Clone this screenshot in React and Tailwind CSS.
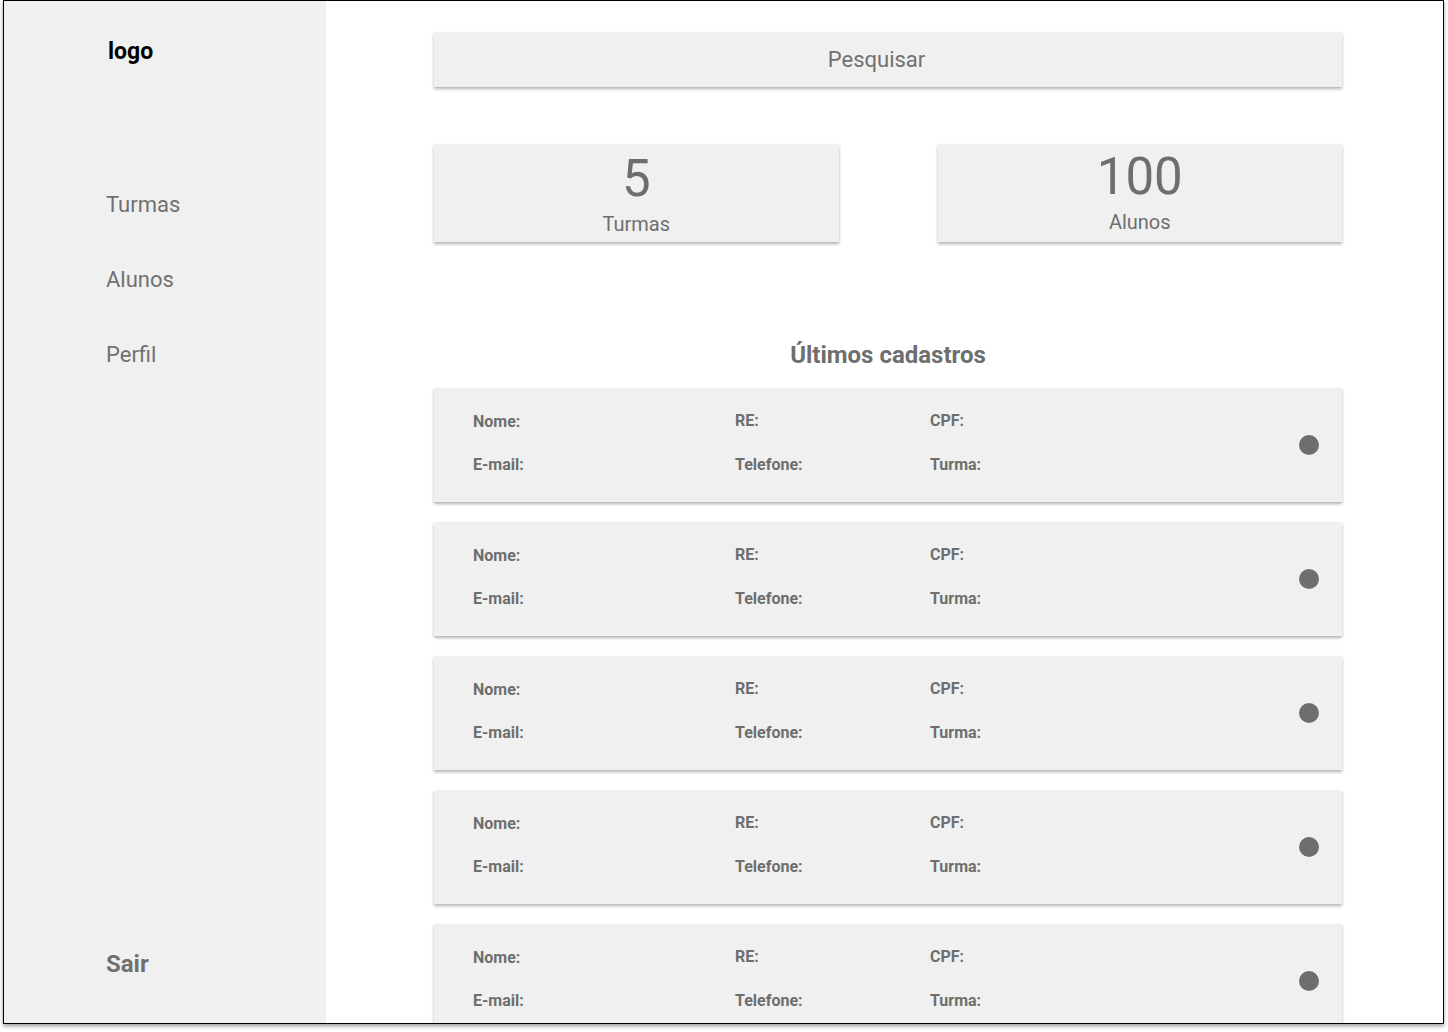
const stats = [
    { value: '5', label: 'Turmas', pad: 'pt-[9px]' },
    { value: '100', label: 'Alunos', pad: 'pt-[7px]' },
];

const menu = ['Turmas', 'Alunos', 'Perfil'];

const rows = [1, 2, 3, 4, 5];

function RecordCard() {
    return (
        <div className="h-[114px] shrink-0 bg-[#f0f0f0] shadow-[0_2px_3px_rgba(0,0,0,0.3)] flex items-center pl-[39px] pr-[23px]">
            <div className="self-start pt-[23px] flex-1 grid grid-cols-[262px_195px_1fr] gap-y-[23px] text-[16px] font-bold text-[#6e6e6e] leading-[20px]">
                <span className="pt-[1px]">Nome:</span>
                <span>RE:</span>
                <span>CPF:</span>
                <span>E-mail:</span>
                <span>Telefone:</span>
                <span>Turma:</span>
            </div>
            <div className="w-5 h-5 rounded-full bg-[#6e6e6e]" />
        </div>
    );
}

export default function App() {
    return (
        <div className="w-[1448px] h-[1032px] bg-white pl-[3px] font-['Roboto',sans-serif] overflow-hidden">
            <div className="w-[1441px] h-[1024px] border-[1.5px] border-black shadow-[0_2px_4px_rgba(0,0,0,0.4)] flex overflow-hidden">
                {/* sidebar */}
                <aside className="w-[322px] shrink-0 bg-[#f0f0f0] flex flex-col pl-[102px] pt-[36px] pb-[44px]">
                    <div className="pl-[2px] text-[23px] font-bold text-black leading-[30px]">logo</div>
                    <nav className="mt-[124px] flex flex-col gap-[47px]">
                        {menu.map((item) => (
                            <a key={item} className="text-[22px] text-[#707070] leading-[28px]">
                                {item}
                            </a>
                        ))}
                    </nav>
                    <div className="mt-auto text-[24px] font-bold text-[#707070] leading-[30px]">Sair</div>
                </aside>

                {/* main */}
                <main className="flex-1 bg-white pl-[108px] pr-[101px] pt-[31px] flex flex-col">
                    <div className="h-[55px] shrink-0 bg-[#f0f0f0] shadow-[0_2px_3px_rgba(0,0,0,0.3)] flex items-center justify-center pr-[23px] text-[22px] text-[#707070]">
                        Pesquisar
                    </div>

                    <div className="mt-[57px] grid grid-cols-2 gap-[99px]">
                        {stats.map((s) => (
                            <div
                                key={s.label}
                                className={`h-[98px] bg-[#f0f0f0] shadow-[0_2px_3px_rgba(0,0,0,0.3)] flex flex-col items-center text-[#6e6e6e] ${s.pad}`}
                            >
                                <span className="text-[51px] leading-[52px]">{s.value}</span>
                                <span className="text-[20px] leading-[24px] mt-[7px]">{s.label}</span>
                            </div>
                        ))}
                    </div>

                    <h2 className="mt-[98px] mb-[18px] text-center text-[24px] font-bold text-[#6e6e6e] leading-[30px]">
                        Últimos cadastros
                    </h2>

                    <div className="flex flex-col gap-5">
                        {rows.map((r) => (
                            <RecordCard key={r} />
                        ))}
                    </div>
                </main>
            </div>
        </div>
    );
}
